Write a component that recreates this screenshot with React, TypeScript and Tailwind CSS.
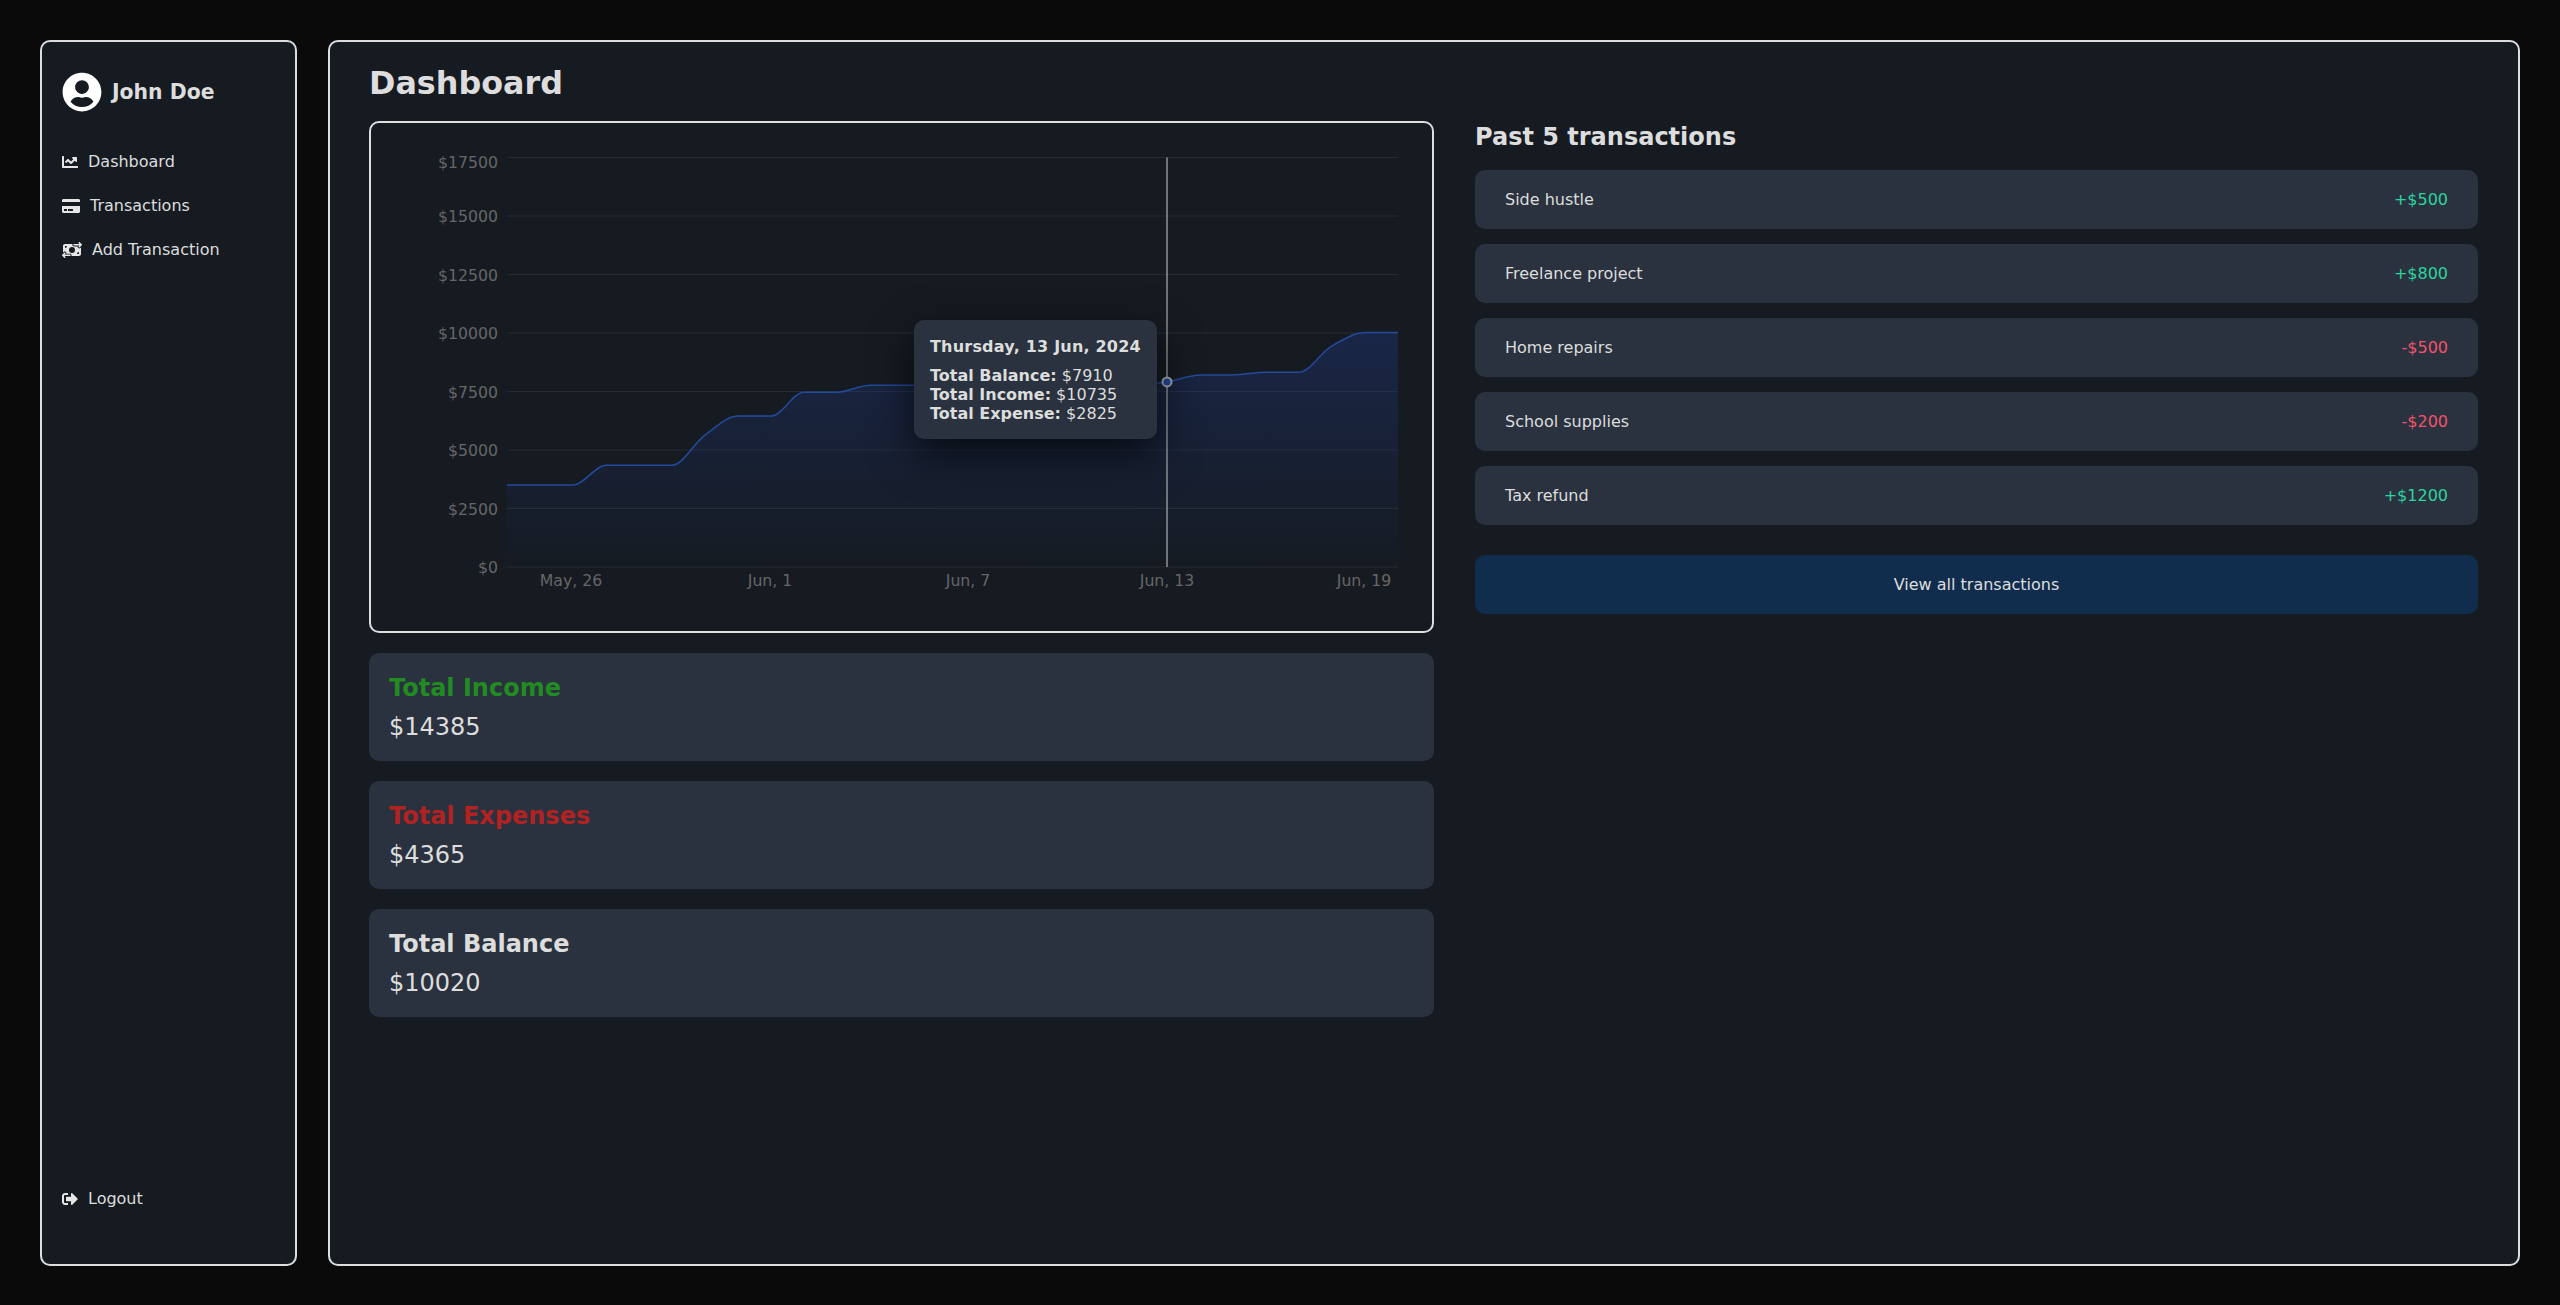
import { FaChartLine, FaCreditCard, FaSignOutAlt, FaUserCircle } from 'react-icons/fa'
import { FaMoneyBillTransfer } from 'react-icons/fa6'

const FONT = '[font-family:"DejaVu_Sans",Verdana,sans-serif]'

const transactions = [
  { name: 'Side hustle', amount: '+$500', income: true },
  { name: 'Freelance project', amount: '+$800', income: true },
  { name: 'Home repairs', amount: '-$500', income: false },
  { name: 'School supplies', amount: '-$200', income: false },
  { name: 'Tax refund', amount: '+$1200', income: true },
]

const stats = [
  { label: 'Total Income', value: '$14385', color: 'text-[#228b22]' },
  { label: 'Total Expenses', value: '$4365', color: 'text-[#b22222]' },
  { label: 'Total Balance', value: '$10020', color: 'text-[#dddddd]' },
]

// chart coords, the svg starts at the card's inner corner
const LEFT = 136
const STEP = 33
const ZERO = 444
const PER_TICK = 58.5

const yTicks = [17500, 15000, 12500, 10000, 7500, 5000, 2500, 0]
const xTicks = [
  { label: 'May, 26', x: 200 },
  { label: 'Jun, 1', x: 399 },
  { label: 'Jun, 7', x: 597 },
  { label: 'Jun, 13', x: 796 },
  { label: 'Jun, 19', x: 993 },
]

const balances = [
  3500, 3500, 3500, 4350, 4350, 4350, 5640, 6450, 6450, 7470, 7470, 7770, 7770, 7770, 7770, 7770, 7770, 7770, 7770,
  7770, 7910, 8210, 8210, 8320, 8320, 9450, 10020, 10020,
]

const yOf = (v: number) => ZERO - (v / 2500) * PER_TICK

// same curve recharts calls "monotone"
function monotonePath(pts: [number, number][]) {
  const n = pts.length
  const slopes = pts.slice(0, -1).map((p, i) => (pts[i + 1][1] - p[1]) / (pts[i + 1][0] - p[0]))
  const tangents = pts.map((_, i) => {
    if (i === 0) return slopes[0]
    if (i === n - 1) return slopes[n - 2]
    const a = slopes[i - 1]
    const b = slopes[i]
    return a * b <= 0 ? 0 : (2 * a * b) / (a + b)
  })
  let d = `M${pts[0][0]},${pts[0][1]}`
  for (let i = 0; i < n - 1; i++) {
    const dx = (pts[i + 1][0] - pts[i][0]) / 3
    d += ` C${pts[i][0] + dx},${pts[i][1] + tangents[i] * dx} ${pts[i + 1][0] - dx},${pts[i + 1][1] - tangents[i + 1] * dx} ${pts[i + 1][0]},${pts[i + 1][1]}`
  }
  return d
}

function BalanceChart() {
  const pts = balances.map((v, i) => [LEFT + i * STEP, yOf(v)] as [number, number])
  const line = monotonePath(pts)
  const area = `${line} L${pts[pts.length - 1][0]},${ZERO} L${LEFT},${ZERO} Z`
  const right = pts[pts.length - 1][0]

  return (
    <svg width={1061} height={508} className="block">
      <defs>
        <linearGradient id="balanceFill" x1="0" y1="0" x2="0" y2="1">
          <stop offset="0%" stopColor="#1e3a8a" stopOpacity={0.36} />
          <stop offset="100%" stopColor="#1e3a8a" stopOpacity={0} />
        </linearGradient>
      </defs>
      {yTicks.map((t) => (
        <g key={t}>
          <line x1={LEFT} x2={right} y1={yOf(t)} y2={yOf(t)} stroke="#262b33" />
          <text
            x={127}
            y={t === 17500 ? yOf(t) + 10 : yOf(t) + 6}
            textAnchor="end"
            fill="#666666"
            fontSize={15.7}
            fontFamily="DejaVu Sans, sans-serif"
          >
            ${t}
          </text>
        </g>
      ))}
      <path d={area} fill="url(#balanceFill)" />
      <path d={line} fill="none" stroke="#244a9c" strokeWidth={1.5} />
      {xTicks.map((t) => (
        <text
          key={t.label}
          x={t.x}
          y={463}
          textAnchor="middle"
          fill="#666666"
          fontSize={15.7}
          fontFamily="DejaVu Sans, sans-serif"
        >
          {t.label}
        </text>
      ))}
      <line x1={796} x2={796} y1={34.5} y2={ZERO} stroke="#cccccc" />
      <circle cx={796} cy={yOf(7910)} r={4.5} fill="#244a9c" stroke="#a9afba" strokeWidth={2} />
    </svg>
  )
}

export default function App() {
  return (
    <div className={`${FONT} flex h-screen gap-[31px] bg-[#0a0a0a] pt-10 pb-[39px] pl-10 pr-10 text-[#dddddd]`}>
      <aside className="flex w-[257px] shrink-0 flex-col justify-between rounded-[10px] border-2 border-[#dddddd] bg-[#161b22] px-5 pt-[30px] pb-[43px]">
        <div>
          <div className="flex items-center gap-2.5">
            <FaUserCircle className="size-10 text-white" />
            <span className="text-[20.4px] font-bold">John Doe</span>
          </div>
          <nav className="mt-[28px] flex flex-col">
            <a className="flex h-11 items-center gap-2.5 text-base">
              <FaChartLine className="size-4 text-[#e6e6e6]" />
              Dashboard
            </a>
            <a className="flex h-11 items-center gap-2.5 text-base">
              <FaCreditCard className="text-lg text-[#e6e6e6]" />
              Transactions
            </a>
            <a className="flex h-11 items-center gap-2.5 text-base">
              <FaMoneyBillTransfer className="text-xl text-[#e6e6e6]" />
              Add Transaction
            </a>
          </nav>
        </div>
        <a className="flex h-11 items-center gap-2.5 text-base">
          <FaSignOutAlt className="size-4 text-[#e6e6e6]" />
          Logout
        </a>
      </aside>

      <main className="flex-1 rounded-[10px] border-2 border-[#dddddd] bg-[#161b22] pt-[19px] pl-[39px] pr-10">
        <h1 className="h-[43px] text-[31.8px] font-bold leading-[43px]">Dashboard</h1>
        <div className="mt-[17px] flex gap-[41px]">
          <section className="w-[1065px] shrink-0">
            <div className="relative h-[512px] rounded-[10px] border-2 border-[#dddddd]">
              <BalanceChart />
              <div className="absolute left-[543px] top-[197px] h-[119px] w-[243px] rounded-[10px] bg-[#29323e] p-4 text-base leading-[19px] shadow-[0_14px_44px_rgba(0,0,0,0.7)]">
                <p className="mb-[10px] mt-px font-bold tracking-[0.2px]">Thursday, 13 Jun, 2024</p>
                <p>
                  <b>Total Balance:</b> $7910
                </p>
                <p>
                  <b>Total Income:</b> $10735
                </p>
                <p>
                  <b>Total Expense:</b> $2825
                </p>
              </div>
            </div>
            <div className="mt-5 flex flex-col gap-5">
              {stats.map((s) => (
                <div key={s.label} className="h-[108px] rounded-[10px] bg-[#29323e] px-5 pt-[18px]">
                  <h2 className={`text-2xl font-bold leading-[34px] ${s.color}`}>{s.label}</h2>
                  <p className="mt-[7px] text-2xl leading-[30px]">{s.value}</p>
                </div>
              ))}
            </div>
          </section>

          <section className="flex-1">
            <h2 className="h-[33px] text-2xl font-bold leading-[33px]">Past 5 transactions</h2>
            <ul className="mt-[16px] flex flex-col gap-[15px]">
              {transactions.map((t) => (
                <li
                  key={t.name}
                  className="flex h-[59px] items-center justify-between rounded-[10px] bg-[#29323e] px-[30px] text-base"
                >
                  <span>{t.name}</span>
                  <span className={t.income ? 'text-[#2dd4a0]' : 'text-[#f4516c]'}>{t.amount}</span>
                </li>
              ))}
            </ul>
            <button className="mt-[30px] h-[59px] w-full rounded-[10px] bg-[#112d4e] text-base">
              View all transactions
            </button>
          </section>
        </div>
      </main>
    </div>
  )
}
